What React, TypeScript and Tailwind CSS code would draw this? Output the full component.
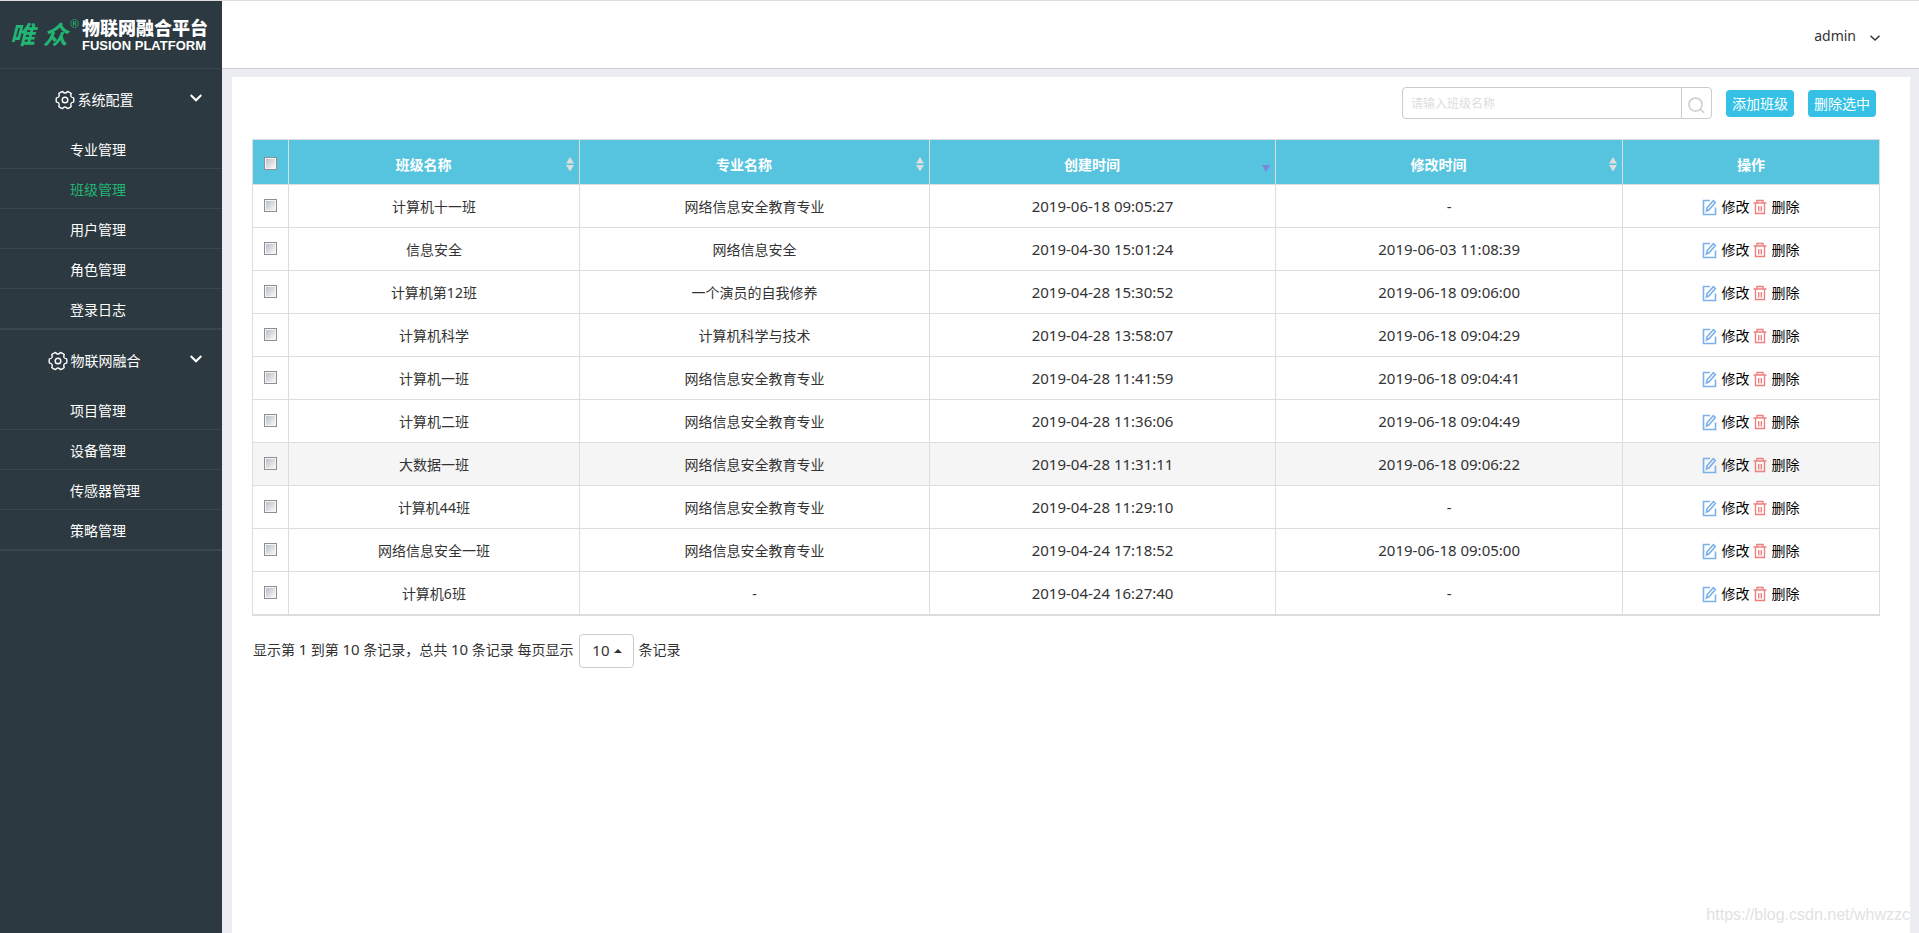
import React from "react";

type Row = { name: string; major: string; created: string; updated: string };

const rows: Row[] = [
  { name: "计算机十一班", major: "网络信息安全教育专业", created: "2019-06-18 09:05:27", updated: "-" },
  { name: "信息安全", major: "网络信息安全", created: "2019-04-30 15:01:24", updated: "2019-06-03 11:08:39" },
  { name: "计算机第12班", major: "一个演员的自我修养", created: "2019-04-28 15:30:52", updated: "2019-06-18 09:06:00" },
  { name: "计算机科学", major: "计算机科学与技术", created: "2019-04-28 13:58:07", updated: "2019-06-18 09:04:29" },
  { name: "计算机一班", major: "网络信息安全教育专业", created: "2019-04-28 11:41:59", updated: "2019-06-18 09:04:41" },
  { name: "计算机二班", major: "网络信息安全教育专业", created: "2019-04-28 11:36:06", updated: "2019-06-18 09:04:49" },
  { name: "大数据一班", major: "网络信息安全教育专业", created: "2019-04-28 11:31:11", updated: "2019-06-18 09:06:22" },
  { name: "计算机44班", major: "网络信息安全教育专业", created: "2019-04-28 11:29:10", updated: "-" },
  { name: "网络信息安全一班", major: "网络信息安全教育专业", created: "2019-04-24 17:18:52", updated: "2019-06-18 09:05:00" },
  { name: "计算机6班", major: "-", created: "2019-04-24 16:27:40", updated: "-" },
];

const groups = [
  { title: "系统配置", items: ["专业管理", "班级管理", "用户管理", "角色管理", "登录日志"] },
  { title: "物联网融合", items: ["项目管理", "设备管理", "传感器管理", "策略管理"] },
];

function Logo() {
  return (
    <div className="flex h-17 items-start border-b border-[#3a474e] pt-[15px] pl-[10px] whitespace-nowrap text-white">
      <div className="flex w-[72px] shrink-0 text-[25px] leading-9 font-bold text-[#22b573] italic">
        <span className="mr-2">唯</span>
        <span>众</span>
        <span className="ml-0.5 text-[11px] leading-4 font-normal not-italic">®</span>
      </div>
      <div className="flex flex-col">
        <span className="text-lg leading-6 font-black">物联网融合平台</span>
        <span className="font-['Liberation_Sans'] text-[13px] leading-3 font-bold">FUSION PLATFORM</span>
      </div>
    </div>
  );
}

function Gear() {
  return (
    <svg viewBox="0 0 20 20" className="h-5 w-5" fill="none" stroke="currentColor" strokeWidth="1.400" strokeLinejoin="round" aria-hidden="true">
      <path d="M18.600 12.150Q14.600 12.700 16.200 16.400Q14.600 18 12.450 18.550Q10 15.400 7.550 18.550Q5.400 18 3.800 16.400Q5.400 12.700 1.400 12.150Q0.800 10 1.400 7.850Q5.400 7.300 3.800 3.600Q5.400 2 7.550 1.450Q10 4.600 12.450 1.450Q14.600 2 16.200 3.600Q14.600 7.300 18.600 7.850Q19.200 10 18.600 12.150Z" />
      <circle cx="10" cy="10" r="2.800" />
    </svg>
  );
}

function EditIcon() {
  return (
    <svg viewBox="0 0 15 17" className="h-[17px] w-[15px]" fill="none" stroke="#7cb1ea" strokeWidth="1.600" aria-hidden="true">
      <path d="M8 1.500H1.500V15.500H13.500V8.500" />
      <path d="M4.500 12L5 8.800L11.300 1.700L13.300 3.500L7 10.800Z" />
    </svg>
  );
}

function TrashIcon() {
  return (
    <svg viewBox="0 0 14 16" className="h-4 w-[14px]" fill="none" stroke="#f07f7f" strokeWidth="1.400" aria-hidden="true">
      <path d="M0.500 4H13.500M4 4V1.500H10V4M2.500 4V14.500H11.500V4M5.700 7V12.500M8.300 7V12.500" />
    </svg>
  );
}

function Sort({ active = false }: { active?: boolean }) {
  return (
    <svg viewBox="0 0 8 16" className="h-4 w-2" aria-hidden="true">
      {!active && <path d="M4 1L8 7.500H0Z" fill="#dddddd" />}
      {active ? <path d="M0 9H8L4 16Z" fill="#7b86dc" /> : <path d="M0 9H8L4 15.500Z" fill="#dddddd" />}
    </svg>
  );
}

function Check({ label }: { label: string }) {
  return (
    <input
      type="checkbox"
      aria-label={label}
      className="block h-[13px] w-[13px] appearance-none border border-[#8e8f8f] bg-linear-to-br from-[#b4b9c4] to-[#ffffff] shadow-[inset_0_0_0_1px_#f4f4f4] checked:bg-[#35c1e5]"
    />
  );
}

function HeadCell({ title, sort }: { title: string; sort?: "both" | "desc" }) {
  return (
    <th scope="col" className="border border-[#dddddd] p-0 font-bold">
      {sort ? (
        <button type="button" className="flex h-11 w-full items-center pt-1.5 pr-[5px]">
          <span className="flex-1 pr-2">{title}</span>
          <span className="-mt-0.5">
            <Sort active={sort === "desc"} />
          </span>
        </button>
      ) : (
        <div className="flex h-11 items-center justify-center pt-1.5">{title}</div>
      )}
    </th>
  );
}

export default function App() {
  return (
    <div className="flex min-h-screen flex-col border-t border-[#dddddd] bg-[#ecedf1] font-['Noto_Sans','Noto_Sans_CJK_SC',sans-serif] text-sm text-[#333333]">
      <div className="flex flex-1">
        <aside className="w-[222px] shrink-0 bg-[#2c3940] text-white">
          <Logo />
          <nav>
            {groups.map((group) => (
              <section key={group.title} className="border-b border-[#3a474e]">
                <button type="button" className="flex h-15 w-full items-center pr-5">
                  <span className="flex flex-1 items-center justify-center gap-[3px] pt-0.5 pr-0.5">
                    <Gear />
                    {group.title}
                  </span>
                  <svg viewBox="0 0 12 8" className="mb-0.5 h-2 w-3" fill="none" stroke="currentColor" strokeWidth="2" aria-hidden="true">
                    <path d="M0.700 1L6 6.300L11.300 1" />
                  </svg>
                </button>
                <ul>
                  {group.items.map((item) => (
                    <li key={item} className="h-10 border-b border-[#3a474e]">
                      <a href="#" className={item === "班级管理" ? "flex h-full items-center pt-0.5 pl-[70px] text-[#22b573]" : "flex h-full items-center pt-0.5 pl-[70px]"}>
                        {item}
                      </a>
                    </li>
                  ))}
                </ul>
              </section>
            ))}
          </nav>
        </aside>
        <div className="flex min-w-0 flex-1 flex-col">
          <header className="flex h-17 items-center justify-end border-b border-[#cccccc] bg-white pt-0.5 pr-[39px]">
            <button type="button" className="flex items-center gap-[14px]">
              admin
              <svg viewBox="0 0 10 6" className="mt-1 h-[6px] w-[10px]" fill="none" stroke="currentColor" strokeWidth="1.400" aria-hidden="true">
                <path d="M0.500 0.700L5 5L9.500 0.700" />
              </svg>
            </button>
          </header>
          <main className="relative mt-2 mr-[9px] ml-[10px] flex-1 bg-white pt-[10px] pr-[30px] pl-5">
            <div className="flex items-center justify-end pr-1">
              <form className="flex h-8 w-[310px] rounded border border-[#cccccc]">
                <input aria-label="班级名称" placeholder="请输入班级名称" className="min-w-0 flex-1 px-2 pt-0.5 text-xs outline-none placeholder:text-[#dddddd]" />
                <button type="button" aria-label="搜索" className="flex w-[30px] items-center justify-center border-l border-[#cccccc]">
                  <svg viewBox="0 0 18 18" className="mt-1 h-[17px] w-[17px]" fill="none" stroke="#cccccc" strokeWidth="1.600" aria-hidden="true">
                    <circle cx="8" cy="8" r="7" />
                    <path d="M13 13L17 16.500" />
                  </svg>
                </button>
              </form>
              <button type="button" className="ml-[14px] h-[27px] w-17 rounded bg-[#35c1e5] pt-0.5 text-white">添加班级</button>
              <button type="button" className="ml-[14px] h-[27px] w-17 rounded bg-[#35c1e5] pt-0.5 text-white">删除选中</button>
            </div>
            <table className="mt-5 w-full table-fixed border-collapse border border-b-2 border-[#dddddd] text-center">
              <colgroup>
                <col className="w-[2.2%]" />
                <col className="w-[17.9%]" />
                <col className="w-[21.5%]" />
                <col className="w-[21.3%]" />
                <col className="w-[21.3%]" />
                <col className="w-[15.8%]" />
              </colgroup>
              <thead className="bg-[#56c4df] text-white">
                <tr>
                  <th className="border border-[#dddddd] p-0">
                    <div className="flex justify-center pt-0.5">
                      <Check label="全选" />
                    </div>
                  </th>
                  <HeadCell title="班级名称" sort="both" />
                  <HeadCell title="专业名称" sort="both" />
                  <HeadCell title="创建时间" sort="desc" />
                  <HeadCell title="修改时间" sort="both" />
                  <HeadCell title="操作" />
                </tr>
              </thead>
              <tbody>
                {rows.map((row, i) => (
                  <tr key={row.name} className={i === 6 ? "bg-[#f5f5f5]" : "hover:bg-[#f5f5f5]"}>
                    <td className="border border-[#dddddd] p-0">
                      <div className="flex h-[42px] items-center justify-center pb-0.5">
                        <Check label={row.name} />
                      </div>
                    </td>
                    <td className="border border-[#dddddd] p-0 pt-0.5">{row.name}</td>
                    <td className="border border-[#dddddd] p-0 pt-0.5">{row.major}</td>
                    <td className="border border-[#dddddd] p-0 pt-0.5 text-[15px]">{row.created}</td>
                    <td className="border border-[#dddddd] p-0 pt-0.5 text-[15px]">{row.updated}</td>
                    <td className="border border-[#dddddd] p-0 pt-0.5 text-black">
                      <div className="flex items-center justify-center gap-1">
                        <button type="button" className="flex items-center gap-1">
                          <EditIcon />
                          修改
                        </button>
                        <button type="button" className="flex items-center gap-1">
                          <TrashIcon />
                          删除
                        </button>
                      </div>
                    </td>
                  </tr>
                ))}
              </tbody>
            </table>
            <div className="mt-[18px] flex items-center gap-1 pl-px">
              <span className="mr-0.5 pb-0.5">
                显示第 <span className="text-[15px]">1</span> 到第 <span className="text-[15px]">10</span> 条记录，总共 <span className="text-[15px]">10</span> 条记录 每页显示
              </span>
              <button type="button" className="flex h-[34px] w-[55px] items-center justify-center gap-1 rounded border border-[#cccccc] text-[15px]">
                10
                <svg viewBox="0 0 8 4" className="h-1 w-2" aria-hidden="true">
                  <path d="M0 4L4 0L8 4Z" fill="#333333" />
                </svg>
              </button>
              <span className="pb-0.5">条记录</span>
            </div>
            <span className="absolute right-0 bottom-2 font-['Liberation_Sans'] text-base leading-5 text-[#e2e2e2]">https://blog.csdn.net/whwzzc</span>
          </main>
        </div>
      </div>
    </div>
  );
}
